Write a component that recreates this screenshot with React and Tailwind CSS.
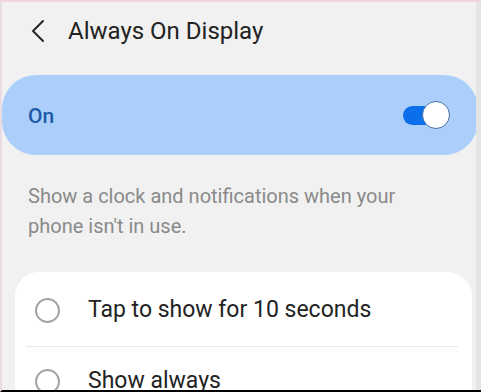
import React, { useState } from 'react'

function Toggle({ on }) {
  return (
    <div className="relative h-[28px] w-[47px]">
      <div
        className={`absolute left-0 top-[5px] h-[19px] w-[32px] rounded-full ${
          on ? 'bg-[#0a6fe8]' : 'bg-[#b0b0b0]'
        }`}
      />
      <div className="absolute right-0 top-0 h-[28px] w-[28px] rounded-full border-[1.5px] border-[#4a6fa0] bg-white" />
    </div>
  )
}

function Radio() {
  return <span className="block h-[25px] w-[25px] shrink-0 rounded-full border-2 border-[#a3a3a3] bg-white" />
}

export default function App() {
  const [on] = useState(true)

  return (
    <div
      className="relative flex h-[392px] w-[481px] flex-col overflow-hidden border-t-2 border-l-2 border-b-2 border-t-[#f3d3de] border-l-[#e8dde0] border-b-black bg-[#f1f1f1]"
      style={{ fontFamily: 'Roboto, "Noto Sans", sans-serif' }}
    >
      {/* Right edge shade */}
      <div className="absolute right-0 top-0 h-full w-[5px] bg-[#e4e4e4]" />

      {/* Header */}
      <div className="flex h-[58px] shrink-0 items-center pl-[28px]">
        <svg width="16" height="24" viewBox="0 0 16 24" fill="none">
          <path d="M13 2 L3 12 L13 22" stroke="#262626" strokeWidth="2" strokeLinecap="round" strokeLinejoin="round" />
        </svg>
        <h1 className="ml-[22px] text-[24px] leading-none text-[#222]">Always On Display</h1>
      </div>

      {/* Master switch */}
      <div className="mt-[15px] mr-[3px] flex h-[80px] shrink-0 items-center justify-between rounded-[34px] bg-[#abcffa] pl-[26px] pr-[28px]">
        <span className="pt-[3px] text-[21px] font-medium text-[#1d5aa6]">On</span>
        <Toggle on={on} />
      </div>

      {/* Description */}
      <p className="mt-[26px] pl-[26px] text-[20px] leading-[30px] text-[#8a8a8a]">
        Show a clock and notifications when your
        <br />
        phone isn't in use.
      </p>

      {/* Options */}
      <div className="mt-[31px] ml-[13px] mr-[9px] flex-1 rounded-t-[24px] bg-white">
        <div className="flex h-[74px] items-center pl-[20px] pt-[3px]">
          <Radio />
          <span className="ml-[28px] text-[23px] text-[#232323]">Tap to show for 10 seconds</span>
        </div>
        <div className="ml-[11px] mr-[14px] h-px bg-[#e9e9e9]" />
        <div className="flex h-[60px] items-center pl-[20px] pt-[8px]">
          <Radio />
          <span className="ml-[28px] text-[23px] text-[#232323]">Show always</span>
        </div>
      </div>
    </div>
  )
}
